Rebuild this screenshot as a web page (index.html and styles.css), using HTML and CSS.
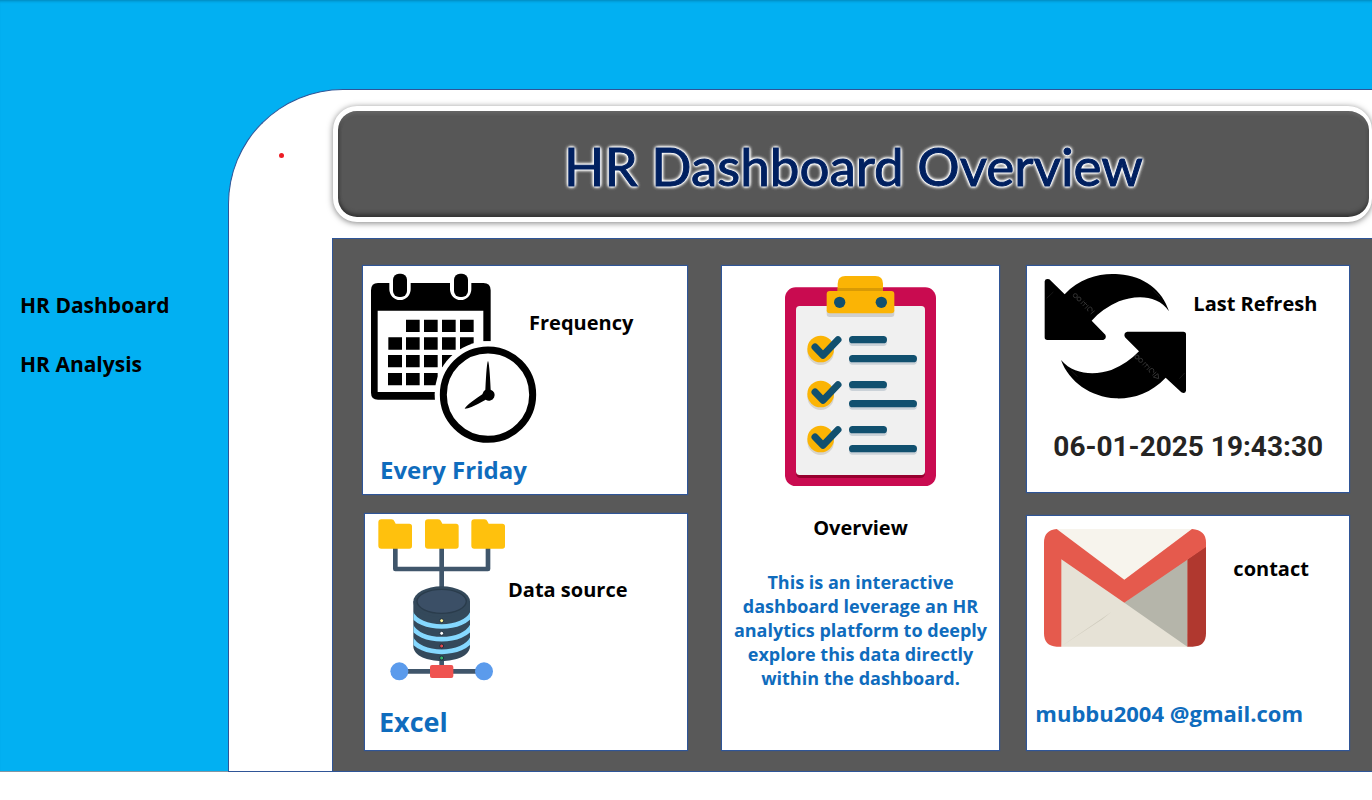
FILE: index.html
```html
<!DOCTYPE html>
<html lang="en">
<head>
<meta charset="utf-8">
<meta name="viewport" content="width=device-width, initial-scale=1">
<title>HR Dashboard Overview</title>
<link rel="stylesheet" href="styles.css">
</head>
<body>
<div class="report">
  <nav class="sidebar">
    <a class="nav-link" href="#dashboard">HR Dashboard</a>
    <a class="nav-link" href="#analysis">HR Analysis</a>
  </nav>
  <main class="main">
    <div class="gutter"><span class="dot"></span></div>
    <div class="content">
      <header class="banner"><h1 class="banner-title">HR Dashboard Overview</h1></header>
      <div class="panel">
        <div class="column column-left">
          <section class="card card-frequency">
            <div class="card-top">
              <svg width="167" height="172" viewBox="30 30 501 516" aria-hidden="true">
                <path d="M54 63H370Q392 63 392 85V238H370V146H53V390H225V413H54Q33 413 33 392V85Q33 63 54 63Z"/>
                <path d="M88 60V82A32 32 0 0 0 152 82V60ZM270 60V82A32 32 0 0 0 334 82V60Z" fill="#fff"/>
                <rect x="99" y="35" width="42" height="70" rx="18"/><rect x="282" y="35" width="42" height="70" rx="18"/>
                <path d="M138 173h41v37h-41zM192 173h41v37h-41zM246 173h41v37h-41zM300 173h41v37h-41zM85 226h41v37H85zM138 226h41v37h-41zM192 226h41v37h-41zM246 226h41v37h-41zM300 226h41v37h-41zM84 279h42v37H84zM138 279h41v37h-41zM192 279h41v37h-41zM246 279h41v37h-41zM84 333h42v37H84zM138 333h41v37h-41zM192 333h41v37h-41z"/>
                <circle cx="384" cy="398" r="160" fill="#fff"/>
                <circle cx="384" cy="398" r="134" fill="#fff" stroke="#000" stroke-width="21"/>
                <path d="M384 297Q388 300 392 383A17 17 0 1 1 377 413Q330 440 314 440Q318 430 367 397Q370 386 376 383Q380 300 384 297Z"/>
              </svg>
              <h2 class="card-title">Frequency</h2>
            </div>
            <p class="value">Every Friday</p>
          </section>
          <section class="card card-source">
            <div class="card-top">
              <svg width="128" height="163" viewBox="54 30 384 489" aria-hidden="true">
                <clipPath id="drum"><path d="M160 280V416C164 473 326 473 330 416V280Z"/></clipPath>
                <path d="M106 118V183H384V118M245 118V240M245 450V480M140 490H350" fill="none" stroke="#40566b" stroke-width="14" stroke-linejoin="round"/>
                <g fill="#ffc10d">
                  <path id="folder" d="M64 34H94Q101 34 104 41L107 47H148Q156 47 156 55V114Q156 122 148 122H64Q55 122 55 113V43Q55 34 64 34Z"/>
                  <use href="#folder" x="140"/><use href="#folder" x="279"/>
                </g>
                <path d="M160 280V416C164 473 326 473 330 416V280Z" fill="#34495b"/>
                <g fill="none" stroke="#85d8ff" stroke-width="14" clip-path="url(#drum)">
                  <path d="M152 312C176 370 314 370 338 312"/><path d="M152 350C176 408 314 408 338 350"/><path d="M152 388C176 446 314 446 338 388"/>
                </g>
                <ellipse cx="245" cy="281" rx="85" ry="46" fill="#34495b"/>
                <ellipse cx="245" cy="280" rx="74" ry="36" fill="#3b4f66" stroke="#2a3c4c" stroke-width="4"/>
                <g stroke="#203040" stroke-width="3"><circle cx="245" cy="338" r="6" fill="#fff59a"/><circle cx="245" cy="376" r="6" fill="#fff"/><circle cx="245" cy="414" r="6" fill="#e5484d"/><circle cx="245" cy="450" r="6" fill="#32b56b"/></g>
                <circle cx="118" cy="490" r="27" fill="#5b9bec"/><circle cx="372" cy="490" r="27" fill="#5b9bec"/>
                <rect x="210" y="471" width="70" height="39" rx="6" fill="#ef5350"/>
              </svg>
              <h2 class="card-title">Data source</h2>
            </div>
            <p class="value">Excel</p>
          </section>
        </div>
        <div class="column column-middle">
          <section class="card card-overview">
            <svg width="153" height="212" viewBox="192 39 459 636" aria-hidden="true">
              <rect x="195" y="76" width="453" height="596" rx="32" fill="#c90b50"/>
              <path d="M228 620H615V634Q615 648 600 648H243Q228 648 228 634Z" fill="#97002f"/>
              <rect x="228" y="132" width="387" height="507" rx="11" fill="#f0f0f0"/>
              <path d="M320 145H523V156Q523 165 514 165H329Q320 165 320 156Z" fill="#cfcfcf"/>
              <path d="M353 90V65Q353 42 376 42H466Q489 42 489 65V90Z" fill="#fbb405"/>
              <path d="M353 78H489V88H353Z" fill="#d99a05"/>
              <rect x="320" y="87" width="203" height="67" rx="9" fill="#fbb405"/>
              <circle cx="359" cy="121" r="17" fill="#11506f"/><circle cx="484" cy="121" r="17" fill="#11506f"/>
              <g id="check-row">
                <circle cx="302" cy="269" r="40" fill="#d7d4cd"/>
                <path d="M398 241H490M398 297H580" fill="none" stroke="#cbd2d8" stroke-width="22" stroke-linecap="round"/>
                <circle cx="302" cy="261" r="40" fill="#fbb405"/>
                <path d="M285 255L309 280L354 233" fill="none" stroke="#11506f" stroke-width="21" stroke-linecap="round" stroke-linejoin="round"/>
                <path d="M398 233H490M398 290H580" fill="none" stroke="#11506f" stroke-width="22" stroke-linecap="round"/>
              </g>
              <use href="#check-row" y="135"/><use href="#check-row" y="270"/>
            </svg>
            <h2 class="card-title">Overview</h2>
            <p class="summary">This is an interactive dashboard leverage an HR analytics platform to deeply explore this data directly within the dashboard.</p>
          </section>
        </div>
        <div class="column column-right">
          <section class="card card-refresh">
            <div class="card-top">
              <svg width="143" height="126" viewBox="60 33 429 378" aria-hidden="true">
                <path d="M62 58Q64 48 76 52L122 97C170 45 235 32 285 37C360 42 415 85 435 148C400 95 330 100 285 118Q235 140 203 176L244 218Q249 230 238 234H70Q62 234 62 226Z"/>
                <path d="M486 386Q484 396 472 391L425 347C380 395 325 411 275 409C200 405 135 360 111 294C150 340 215 340 262 324Q310 305 345 268L303 226Q297 213 310 209H478Q486 209 486 217Z"/>
                <path d="M68 109L88 90M388 86L408 105M142 326L160 344M466 350L482 333" stroke="#222" stroke-width="2"/>
                <g fill="none" stroke="#333" stroke-width="3">
                  <g id="mark"><circle cx="154" cy="101" r="6"/><circle cx="165" cy="111" r="6"/><path d="M170 126L180 116M176 132L186 122M180 120L190 130M183 140L193 130M192 148Q186 140 196 136T204 148M200 156L212 146"/></g>
                  <use href="#mark" x="185" y="184"/><path d="M388 345L402 335L404 350Z"/>
                </g>
              </svg>
              <h2 class="card-title">Last Refresh</h2>
            </div>
            <p class="timestamp">06-01-2025 19:43:30</p>
          </section>
          <section class="card card-contact">
            <div class="card-top">
              <svg width="164" height="120" viewBox="57 54 492 360" aria-hidden="true">
                <path d="M98 57H508L490 410H112Z" fill="#e6e2d6"/>
                <path d="M98 57H506L301 220Z" fill="#f7f4ed"/>
                <path d="M301 278L490 140V410Z" fill="#b5b5aa"/>
                <path d="M112 409L262 306L235 328Z" fill="#cfcbbd"/>
                <path d="M490 148L546 108V370Q546 410 506 410H490Z" fill="#b0382f"/>
                <path d="M98 57L301 209L504 57Q546 60 546 98V111L301 278L112 148V410H98Q60 408 60 370V98Q60 60 98 57Z" fill="#e55a4d"/>
              </svg>
              <h2 class="card-title">contact</h2>
            </div>
            <p class="value">mubbu2004 @gmail.com</p>
          </section>
        </div>
      </div>
    </div>
  </main>
</div>
</body>
</html>
```
FILE: styles.css
```css
* { box-sizing: border-box; }
body { margin: 0; background: #fff; font-family: "Open Sans", "Noto Sans", sans-serif; font-weight: 700; color: #000; }
h1, h2, p { margin: 0; }
svg { display: block; flex: none; }

.report {
  display: grid;
  grid-template-columns: 228px 1fr;
  padding-top: 89px;
  background: #02b0f2;
  box-shadow: 0 2px 20px rgba(0, 0, 0, .3), inset 0 3px 3px -2px rgba(0, 0, 0, .25);
}
.sidebar {
  display: flex;
  flex-direction: column;
  gap: 29px;
  padding: 201px 20px 0;
  border-bottom: 1px solid #8296a3;
}
.nav-link { color: #000; text-decoration: none; font-size: 21px; line-height: 30px; }

.main {
  display: flex;
  background: #fff;
  border: 1px solid #2f5597;
  border-right: 0;
  border-radius: 115px 0 0 0;
}
.gutter { flex: none; width: 103px; padding: 63px 0 0 50px; }
.dot { display: block; width: 5px; height: 5px; border-radius: 50%; background: #ed1c24; }
.content { flex: 1; min-width: 0; }

.banner {
  display: flex;
  justify-content: center;
  align-items: center;
  height: 116px;
  margin: 16px 0 16px 1px;
  padding-top: 4px;
  border: 5px solid #fff;
  border-right-width: 3px;
  border-radius: 24px;
  background: #575757;
  box-shadow: 0 1px 6px rgba(0, 0, 0, .5), inset 0 -4px 4px -1px #353535, inset 0 3px 3px #656565, inset 1px 0 3px #333;
}
.banner-title {
  font-family: Lato, "Open Sans", sans-serif;
  font-size: 53px;
  font-weight: 400;
  line-height: 64px;
  color: #002060;
  -webkit-text-stroke: 1px #002060;
  text-shadow: 0 0 2px #fff, 0 0 2px #fff, 0 0 2px #fff, 0 0 3px #fff, 0 0 3px #fff, 0 0 3px #fff, 0 0 4px #fff, 0 0 4px #fff, 0 0 4px #fff;
}

.panel {
  display: grid;
  grid-template-columns: 333fr 280fr 324fr;
  gap: 26px;
  padding: 26px 22px 20px 29px;
  border: 1px solid #2f5597;
  border-width: 1px 0 0 1px;
  background: #595959;
}
.column { display: flex; flex-direction: column; min-width: 0; }
.column-left { gap: 18px; padding-right: 7px; }
.column-right { gap: 22px; }

.card { background: #fff; border: 1px solid #2f5597; box-shadow: 0 0 1px #2f5597; }
.card-top { display: flex; align-items: flex-start; }
.card-title { font-size: 20px; line-height: 30px; }
.value { color: #0f6cbd; font-size: 24px; line-height: 32px; }

.card-frequency { padding: 6px 7px 8px; }
.card-frequency .card-title { margin: 36px 0 0 -8px; }
.card-frequency .value { padding: 10px 10px 0; }

.card-source { flex: 1; margin-left: 2px; padding: 4px 13px 10px; }
.card-source .card-title { padding: 57px 0 0 2px; }
.card-source .value { margin-top: 23px; padding-left: 1px; font-size: 27px; line-height: 36px; }

.card-overview { flex: 1; display: flex; flex-direction: column; align-items: center; padding: 9px 8px; }
.card-overview .card-title { margin-top: 26px; }
.summary { margin-top: 27px; color: #0f6cbd; font-size: 18px; line-height: 24px; text-align: center; }

.card-refresh { padding: 7px 17px 27px; }
.card-refresh .card-title { padding: 16px 0 0 6px; }
.timestamp { margin-top: 30px; color: #252423; font-family: Roboto, sans-serif; font-size: 28px; line-height: 36px; text-align: center; }

.card-contact { flex: 1; padding: 12px 8px; }
.card-contact .card-top { padding-left: 8px; }
.card-contact .card-title { padding: 26px 0 0 26px; }
.card-contact .value { margin-top: 49px; font-size: 22px; }
```
